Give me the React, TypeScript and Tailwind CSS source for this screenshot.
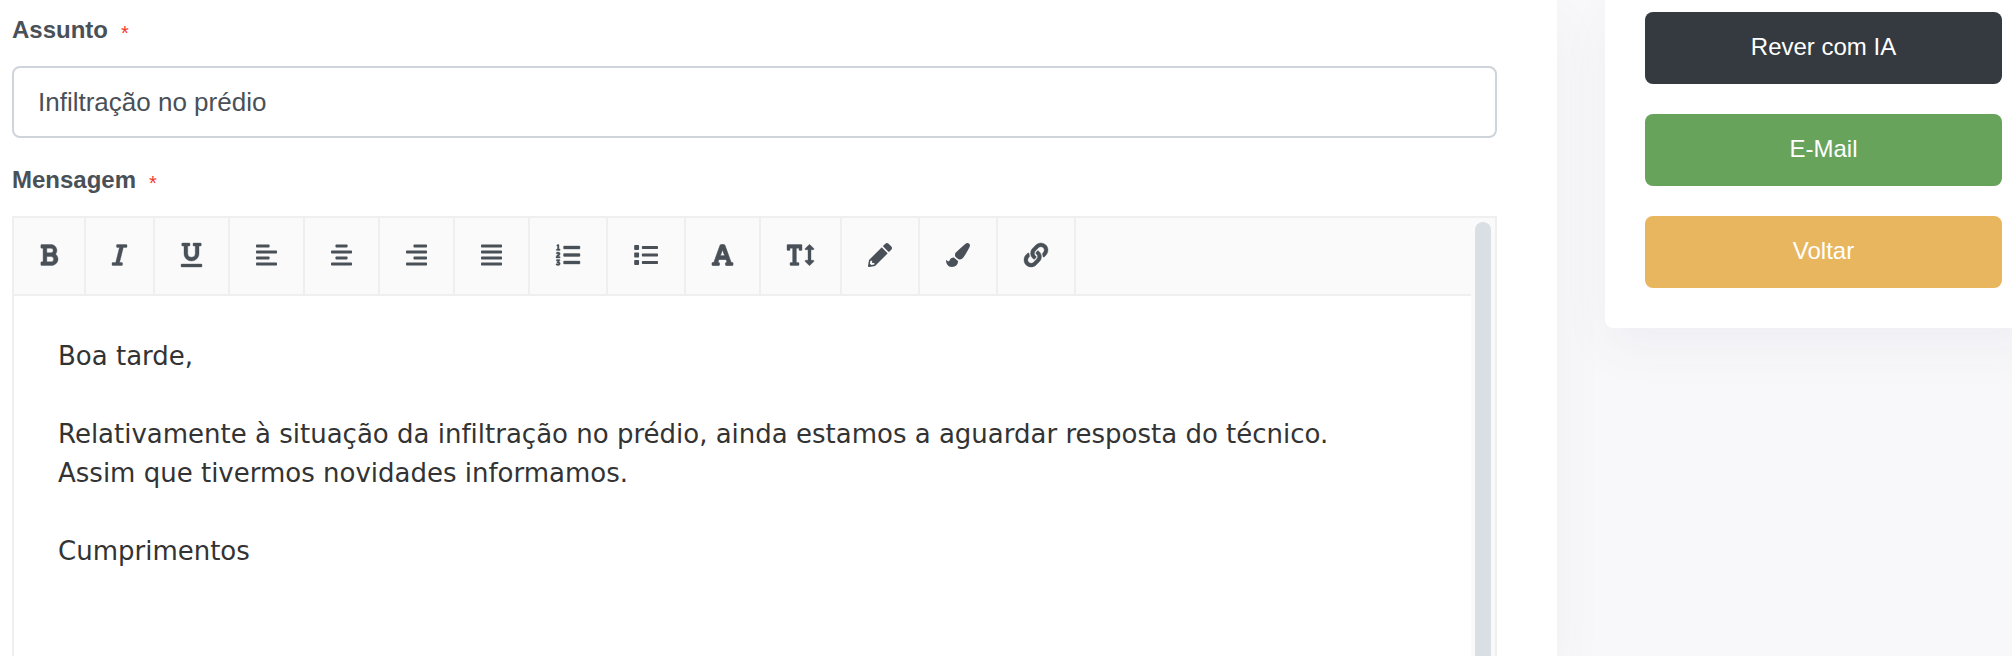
import React, { useState } from "react";
import {
  FaBold,
  FaFont,
  FaItalic,
  FaLink,
  FaListOl,
  FaPaintBrush,
  FaTextHeight,
  FaUnderline,
} from "react-icons/fa";

type IconProps = { className?: string };

// Builds a four line paragraph icon, each line is [x, width]
const alignIcon = (lines: number[][]): React.FC<IconProps> => ({ className }) => (
  <svg className={className} viewBox="0 0 448 512" fill="currentColor" aria-hidden="true">
    {lines.map(([x, width], i) => (
      <rect key={i} x={x} y={30 + i * 128} width={width} height="68" rx="16" />
    ))}
  </svg>
);

const AlignLeftIcon = alignIcon([[0, 288], [0, 448], [0, 288], [0, 448]]);
const AlignCenterIcon = alignIcon([[96, 256], [0, 448], [96, 256], [0, 448]]);
const AlignRightIcon = alignIcon([[160, 288], [0, 448], [160, 288], [0, 448]]);
const JustifyIcon = alignIcon([[0, 448], [0, 448], [0, 448], [0, 448]]);

// List icon with square bullets
const SquareListIcon: React.FC<IconProps> = ({ className }) => (
  <svg className={className} viewBox="0 0 512 512" fill="currentColor" aria-hidden="true">
    {[96, 256, 416].map((y) => (
      <g key={y}>
        <rect x="4" y={y - 52} width="104" height="104" rx="18" />
        <rect x="168" y={y - 34} width="344" height="68" rx="16" />
      </g>
    ))}
  </svg>
);

const PencilIcon: React.FC<IconProps> = ({ className }) => (
  <svg className={className} viewBox="0 0 512 512" fill="currentColor" fillRule="evenodd" aria-hidden="true">
    <path d="M497.9 142.1l-46.1 46.1c-4.7 4.7-12.3 4.7-17 0l-111-111c-4.7-4.7-4.7-12.3 0-17l46.1-46.1c18.7-18.7 49.1-18.7 67.9 0l60.1 60.1c18.8 18.7 18.8 49.1 0 67.9z" />
    <path d="M284.2 99.8L21.6 362.4.4 483.9c-2.9 16.4 11.4 30.6 27.8 27.8l121.5-21.3 262.6-262.6c4.7-4.7 4.7-12.3 0-17l-111-111c-4.8-4.7-12.4-4.7-17.1 0zM88 424h48v36.3l-64.5 11.3-31.1-31.1L51.7 376H88v48z" />
  </svg>
);

const tools = [
  { label: "Negrito", icon: FaBold, size: "w-[18px] stroke-[8]" },
  { label: "Itálico", icon: FaItalic, size: "w-[15px] stroke-[8]" },
  { label: "Sublinhado", icon: FaUnderline, size: "w-[21px] stroke-[8]" },
  { label: "Alinhar à esquerda", icon: AlignLeftIcon, size: "w-[21px]" },
  { label: "Centrar", icon: AlignCenterIcon, size: "w-[21px]" },
  { label: "Alinhar à direita", icon: AlignRightIcon, size: "w-[21px]" },
  { label: "Justificar", icon: JustifyIcon, size: "w-[21px]" },
  { label: "Lista ordenada", icon: FaListOl, size: "w-6 stroke-[8]" },
  { label: "Lista", icon: SquareListIcon, size: "w-6" },
  { label: "Tipo de letra", icon: FaFont, size: "w-[21px] stroke-[14]" },
  { label: "Tamanho", icon: FaTextHeight, size: "w-[27px] stroke-[8]" },
  { label: "Cor do texto", icon: PencilIcon, size: "w-6" },
  { label: "Cor de fundo", icon: FaPaintBrush, size: "w-6" },
  { label: "Ligação", icon: FaLink, size: "w-6 stroke-[8]" },
];

const actions = [
  { label: "Rever com IA", color: "bg-[#343a40]" },
  { label: "E-Mail", color: "bg-[#67a35b]" },
  { label: "Voltar", color: "bg-[#e8b65f]" },
];

const Required: React.FC = () => (
  <span className="ml-[13px] align-[-2px] text-xl leading-none font-normal text-[#f4362c]">*</span>
);

const App: React.FC = () => {
  const [subject, setSubject] = useState("Infiltração no prédio");

  return (
    <div className="flex min-h-screen overflow-hidden bg-[#f8f8fa] font-['Liberation_Sans',Arial,sans-serif] text-2xl text-[#495057]">
      <main className="flex min-w-0 flex-1 flex-col bg-white pt-3 pr-[60px] pl-3 shadow-[0_20px_50px_rgba(82,63,115,0.05)]">
        <label htmlFor="subject" className="mb-[18px] leading-9 font-bold">
          Assunto
          <Required />
        </label>
        <input
          id="subject"
          type="text"
          value={subject}
          onChange={(e) => setSubject(e.target.value)}
          className="mb-6 h-[72px] w-full rounded-lg border-2 border-[#ced4da] bg-white px-6 text-[26px] outline-none"
        />

        <span id="message-label" className="mb-[18px] leading-9 font-bold">
          Mensagem
          <Required />
        </span>
        <div className="flex flex-1 border-2 border-b-0 border-[#efefef]">
          <div className="min-w-0 flex-1">
            <div role="toolbar" className="flex border-b-2 border-[#efefef] bg-[#fafafa]">
              {tools.map(({ label, icon: Icon, size }) => (
                <button
                  key={label}
                  type="button"
                  aria-label={label}
                  className="flex h-[76px] items-center border-r-2 border-[#efefef] px-[26px] pb-0.5 hover:bg-white"
                >
                  <Icon className={`h-6 overflow-visible ${size}`} />
                </button>
              ))}
            </div>
            <div
              role="textbox"
              aria-multiline="true"
              aria-labelledby="message-label"
              contentEditable
              suppressContentEditableWarning
              className="px-11 py-[41px] font-['DejaVu_Sans',Verdana,sans-serif] text-[26px] leading-[39px] text-[#333333] outline-none [font-variant-ligatures:none]"
            >
              <div>Boa tarde,</div>
              <div><br /></div>
              <div>Relativamente à situação da infiltração no prédio, ainda estamos a aguardar resposta do técnico.</div>
              <div>Assim que tivermos novidades informamos.</div>
              <div><br /></div>
              <div>Cumprimentos</div>
            </div>
          </div>
          {/* Scrollbar */}
          <div className="flex w-6 bg-[#fafafa] px-1 pt-1">
            <div className="w-full rounded-t-full bg-[#d9dfe3]"></div>
          </div>
        </div>
      </main>

      <aside className="-mr-[30px] w-[485px] shrink-0 pl-12">
        <div className="flex flex-col gap-[30px] rounded-b-lg bg-white px-10 pt-3 pb-10 shadow-[0_20px_50px_rgba(82,63,115,0.05)]">
          {actions.map(({ label, color }) => (
            <button key={label} type="button" className={`h-[72px] rounded-lg pb-0.5 text-white ${color}`}>
              {label}
            </button>
          ))}
        </div>
      </aside>
    </div>
  );
};

export default App;
